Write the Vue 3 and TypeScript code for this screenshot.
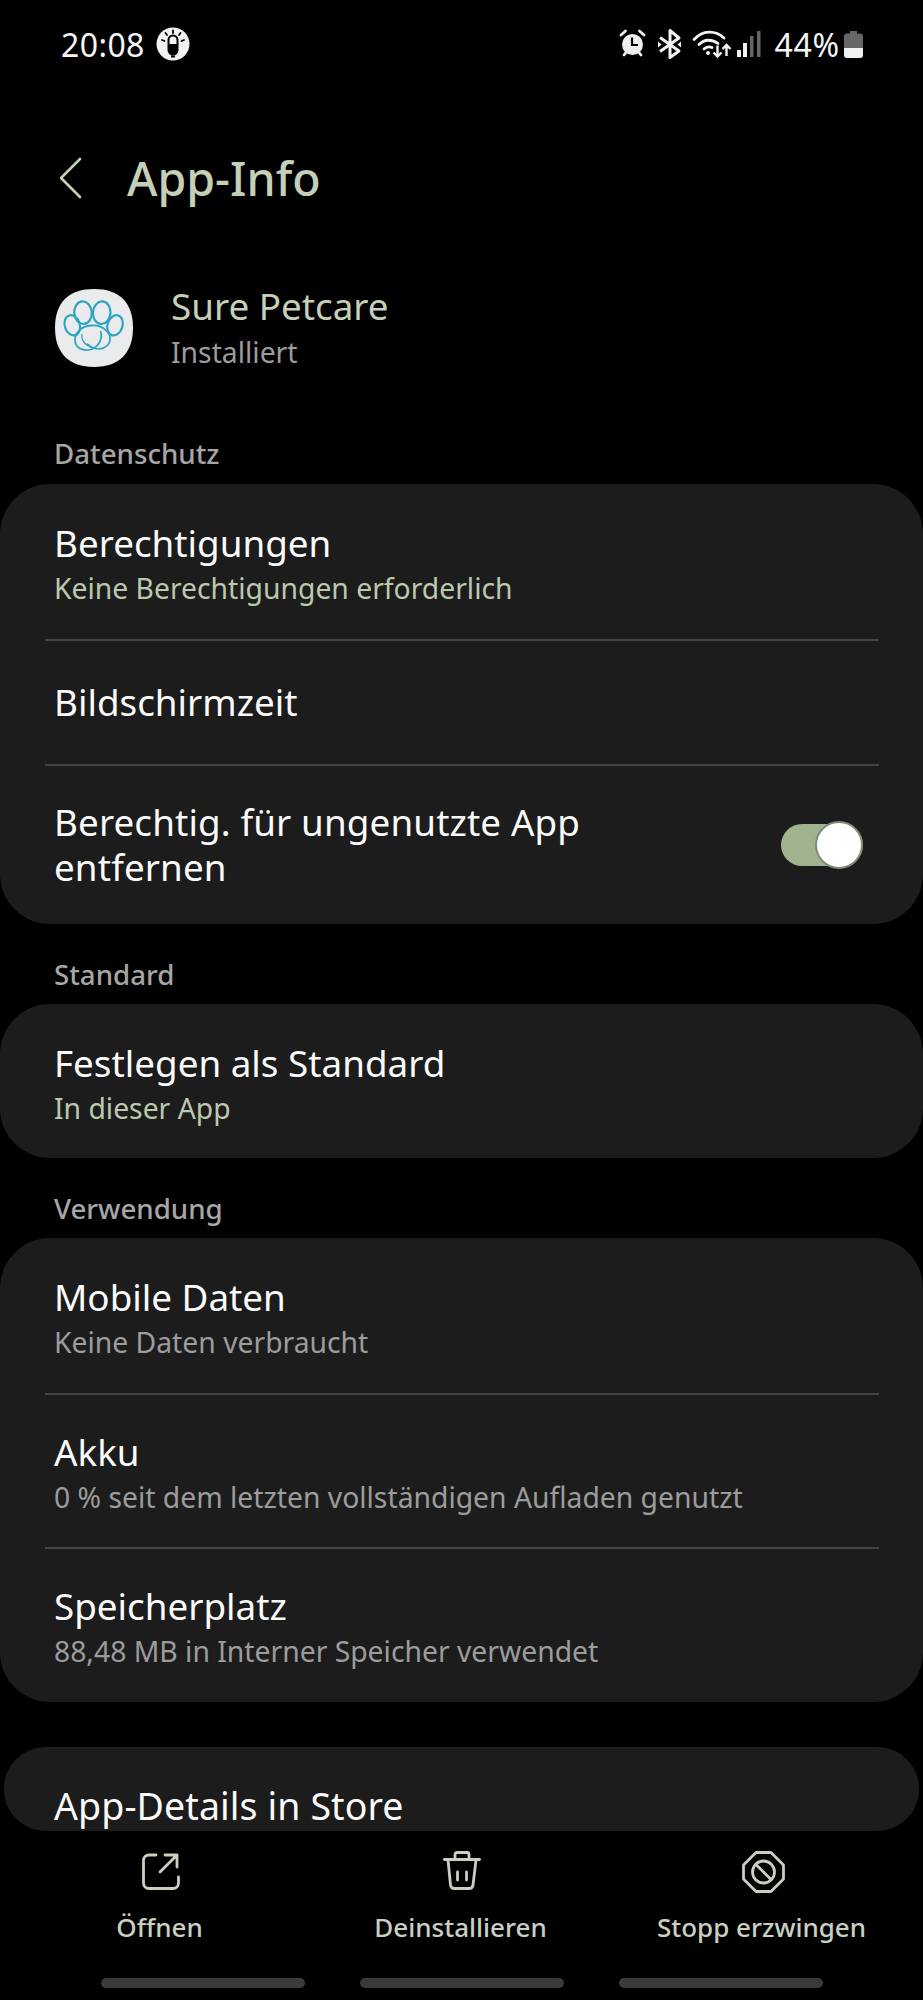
<script setup lang="ts">
interface Row {
  title: string
  sub?: string
  accent?: boolean
  h: number
}
const card1: Row[] = [
  { title: 'Berechtigungen', sub: 'Keine Berechtigungen erforderlich', accent: true, h: 156 },
  { title: 'Bildschirmzeit', h: 125 },
]
const card3: Row[] = [
  { title: 'Mobile Daten', sub: 'Keine Daten verbraucht', h: 156 },
  { title: 'Akku', sub: '0 % seit dem letzten vollständigen Aufladen genutzt', h: 154 },
  { title: 'Speicherplatz', sub: '88,48 MB in Interner Speicher verwendet', h: 154 },
]
</script>

<template>
  <div class="phone">
    <div class="scroll">
      <div class="status">
        <div class="status-left">
          <span class="time">20:08</span>
          <svg class="mic" width="34" height="34" viewBox="5 5 34 34">
            <circle cx="22" cy="22" r="16.5" fill="#f2f2f2" />
            <path d="M17.5 18a4.5 4.5 0 0 1 9 0v10a4.5 4.5 0 0 1-9 0z" fill="none" stroke="#000" stroke-width="2" />
            <path d="M17.5 22h9v6a4.5 4.5 0 0 1-9 0z" fill="#000" />
            <path d="M20 34.5h4" stroke="#000" stroke-width="2" />
            <path d="M22 8.5v2.5M14.5 11l1.5 2M29.5 11l-1.5 2M11 18l2.500 1M33 18l-2.500 1" stroke="#000" stroke-width="1.800" stroke-linecap="round" />
          </svg>
        </div>
        <div class="status-right">
          <svg width="150" height="40" viewBox="0 0 150 40">
            <circle cx="19.500" cy="20.500" r="10.500" fill="#efefef" />
            <path d="M19 13.500v7.500h6" fill="none" stroke="#000" stroke-width="2.200" />
            <path d="M8 11l4.500-4M31 11l-4.500-4M11 31l2-2.500M28 31l-2-2.500" stroke="#efefef" stroke-width="2.800" stroke-linecap="round" />
            <path d="M47 13.500L66 27 57 33.500V6.500L66 14 47 27.500" fill="none" stroke="#f2f2f2" stroke-width="3" stroke-linejoin="round" />
            <path d="M45 17.500l3.500 3-3.500 3zM68 17.500l-3.500 3 3.500 3z" fill="#f2f2f2" />
            <path d="M81 15.500C90 6 102 6 111 14" fill="none" stroke="#f2f2f2" stroke-width="2.800" stroke-linecap="round" />
            <path d="M86 20.500c5.500-5.500 13-5.500 19-1" fill="none" stroke="#f2f2f2" stroke-width="2.800" stroke-linecap="round" />
            <path d="M91 25c2.500-2.500 5.500-2.500 8-1.500" fill="none" stroke="#f2f2f2" stroke-width="2.800" stroke-linecap="round" />
            <circle cx="95" cy="29" r="2" fill="#f2f2f2" />
            <path d="M104.500 21.500v10.500M100.500 28.500l4 4 4-4M113.500 32V21.500M109.500 25l4-4 4 4" fill="none" stroke="#f2f2f2" stroke-width="2.400" />
            <rect x="124" y="26" width="4" height="7" fill="#f2f2f2" />
            <rect x="130" y="19" width="4" height="14" fill="#f2f2f2" />
            <rect x="137" y="12" width="3.500" height="21" fill="#666" />
            <rect x="144" y="7" width="3.500" height="26" fill="#666" />
          </svg>
          <span class="pct">44%</span>
          <svg class="battery" width="19" height="27" viewBox="0 0 19 27">
            <path d="M6 0h7v2.500h3a3 3 0 0 1 3 3V17H0V5.500a3 3 0 0 1 3-3h3z" fill="#666" />
            <path d="M0 17h19v7a3 3 0 0 1-3 3H3a3 3 0 0 1-3-3z" fill="#f0f0f0" />
          </svg>
        </div>
      </div>

      <header class="head">
        <svg class="chev" width="24" height="42" viewBox="0 0 24 42">
          <path d="M22 2L3 21l19 19" fill="none" stroke="#c5d0b8" stroke-width="2.600" stroke-linecap="round" stroke-linejoin="round" />
        </svg>
        <h1 class="title">App-Info</h1>
      </header>

      <section class="appinfo">
        <svg class="appicon" width="78" height="78" viewBox="8 5 78 78">
          <path d="M47 5C72 5 86 18 86 44 86 69 72 83 47 83 22 83 8 69 8 44 8 18 22 5 47 5z" fill="#e9ebec" />
          <g fill="none" stroke="#2fa5bf" stroke-width="2.200">
            <ellipse cx="25.300" cy="41.300" rx="7.500" ry="10.300" transform="rotate(-18 25.300 41.300)" />
            <ellipse cx="36" cy="28.700" rx="8.800" ry="11.300" transform="rotate(-5 36 28.700)" />
            <ellipse cx="54.700" cy="28.700" rx="8.800" ry="11.300" transform="rotate(5 54.700 28.700)" />
            <ellipse cx="68" cy="41.300" rx="7.500" ry="10.300" transform="rotate(18 68 41.300)" />
            <path d="M44 41.500C34 42 28 49 28 56 28 64 36 67.500 44 65.500 52 63 56 54 53.500 47" stroke-width="1.800" />
            <path d="M44 41.500C55 40.500 64 48 63 56 62 63 54 66 48 64.500 44 63.500 42 62 40 60" stroke-width="1.800" />
            <path d="M35 50C34 55 37 60 42 62" stroke-width="1.300" />
          </g>
        </svg>
        <div>
          <div class="appname">Sure Petcare</div>
          <div class="appstate">Installiert</div>
        </div>
      </section>

      <div class="label label-first">Datenschutz</div>
      <div class="card">
        <div v-for="r in card1" :key="r.title" class="row" :class="{ 'has-sub': r.sub, 'is-plain': !r.sub }" :style="{ height: r.h + 'px' }">
          <div class="row-title">{{ r.title }}</div>
          <div v-if="r.sub" class="row-sub" :class="{ accent: r.accent }">{{ r.sub }}</div>
        </div>
        <div class="row row-toggle">
          <div class="row-title wrap">Berechtig. für ungenutzte App entfernen</div>
          <div class="switch"><span class="thumb"></span></div>
        </div>
      </div>

      <div class="label">Standard</div>
      <div class="card">
        <div class="row has-sub row-single">
          <div class="row-title">Festlegen als Standard</div>
          <div class="row-sub accent">In dieser App</div>
        </div>
      </div>

      <div class="label">Verwendung</div>
      <div class="card">
        <div v-for="r in card3" :key="r.title" class="row has-sub" :style="{ height: r.h + 'px' }">
          <div class="row-title">{{ r.title }}</div>
          <div class="row-sub">{{ r.sub }}</div>
        </div>
      </div>

      <div class="card card-last">
        <div class="row-title">App-Details in Store</div>
      </div>
    </div>

    <nav class="actions">
      <div class="action">
        <svg width="60" height="55" viewBox="0 0 60 55">
          <g fill="none" stroke="#c8d0c0" stroke-width="2.800" stroke-linecap="round" stroke-linejoin="round">
            <path d="M26 10H19a5.500 5.500 0 0 0-5.500 5.500V38a5.500 5.500 0 0 0 5.500 5.500H43a5.500 5.500 0 0 0 5.500-5.500V32" />
            <path d="M30 27L47 10M35 10H47V22" />
          </g>
        </svg>
        <span>Öffnen</span>
      </div>
      <div class="action">
        <svg width="60" height="55" viewBox="0 0 60 55">
          <g fill="none" stroke="#c8d0c0" stroke-width="2.800" stroke-linecap="round" stroke-linejoin="round">
            <path d="M13.500 14.500H48.500" />
            <path d="M24 14V9.500a2 2 0 0 1 2-2h10a2 2 0 0 1 2 2V14" />
            <path d="M17 15l2.500 25a4 4 0 0 0 4 3.500H38a4 4 0 0 0 4-3.500L45 15" />
            <path d="M26.500 27v8M35.500 27v8" />
          </g>
        </svg>
        <span>Deinstallieren</span>
      </div>
      <div class="action">
        <svg width="60" height="55" viewBox="0 0 60 55">
          <g fill="none" stroke="#c8d0c0" stroke-width="2.800" stroke-linecap="round" stroke-linejoin="round">
            <path d="M24 7.500H39L51.500 20V34L39 46.500H24L11.500 34V20z" />
            <circle cx="31.500" cy="27" r="11" />
            <path d="M25 20.500L38 33.500" />
          </g>
        </svg>
        <span>Stopp erzwingen</span>
      </div>
    </nav>

    <div class="navbar">
      <span></span><span></span><span></span>
    </div>
  </div>
</template>

<style scoped>
.phone {
  width: 923px;
  height: 2000px;
  background: #000;
  color: #fff;
  font-family: "Noto Sans", "Liberation Sans", sans-serif;
  display: flex;
  flex-direction: column;
  overflow: hidden;
}
.scroll {
  height: 1831px;
  overflow: hidden;
  flex: none;
}
.status {
  height: 88px;
  display: flex;
  justify-content: space-between;
  align-items: center;
  padding: 0 60px 0 61px;
}
.status-left,
.status-right {
  display: flex;
  align-items: center;
}
.time {
  font-size: 32px;
  color: #f5f5f5;
  letter-spacing: 0.4px;
}
.mic {
  margin-left: 11px;
}
.status-right svg:first-child {
  margin-right: 11px;
}
.pct {
  font-size: 32px;
  letter-spacing: 0.8px;
  color: #f5f5f5;
}
.battery {
  margin-left: 4px;
}
.head {
  height: 168px;
  box-sizing: border-box;
  display: flex;
  align-items: center;
  padding: 12px 0 0 58px;
}
.chev {
  margin-right: 45px;
}
.title {
  margin: 0;
  font-size: 46.500px;
  font-weight: 500;
  color: #c5d0b8;
}
.appinfo {
  display: flex;
  align-items: center;
  gap: 38px;
  padding: 0 0 0 55px;
  height: 143px;
}
.appicon {
  flex: none;
}
.appname {
  font-size: 36.800px;
  color: #c5d0b8;
  line-height: 46px;
  margin-top: 1px;
}
.appstate {
  font-size: 28.300px;
  color: #9c9c9c;
  line-height: 42px;
  margin-top: 2px;
}
.label {
  height: 80px;
  padding: 33px 0 0 54px;
  box-sizing: border-box;
  font-size: 27.700px;
  font-weight: 500;
  color: #a6a6a6;
  line-height: 34px;
}
.label-first {
  height: 85px;
  padding-top: 37px;
}
.card {
  background: #1c1c1c;
  border-radius: 50px;
}
.row {
  box-sizing: border-box;
  padding: 0 45px 0 54px;
  display: flex;
  flex-direction: column;
  justify-content: center;
  position: relative;
}
.has-sub {
  padding-top: 6px;
}
.is-plain {
  padding-bottom: 2px;
}
.row-single {
  height: 154px;
  padding-top: 7px;
}
.row + .row::before {
  content: "";
  position: absolute;
  left: 45px;
  right: 44px;
  top: -1px;
  height: 2px;
  background: #434343;
}
.row-title {
  font-size: 36.800px;
  line-height: 46px;
  color: #fafafa;
}
.row-sub {
  font-size: 28.300px;
  line-height: 44px;
  color: #9c9c9c;
}
.row-sub.accent {
  color: #bcc8ae;
}
.row-toggle {
  flex-direction: row;
  align-items: center;
  justify-content: space-between;
  height: 159px;
  padding-top: 1px;
}
.wrap {
  width: 610px;
  line-height: 45px;
  letter-spacing: 0.12px;
}
.switch {
  width: 82px;
  height: 42px;
  border-radius: 21px;
  background: #a0b38f;
  position: relative;
  flex: none;
  margin-right: 15px;
}
.thumb {
  position: absolute;
  right: 0;
  top: -3px;
  width: 48px;
  height: 48px;
  box-sizing: border-box;
  border-radius: 50%;
  background: #fff;
  border: 2px solid #7f8b75;
}
.card-last {
  height: 84px;
  margin: 45px 4px 0;
  border-radius: 42px / 41px;
  padding: 36px 0 0 50px;
  box-sizing: border-box;
  overflow: hidden;
}
.card-last .row-title {
  font-size: 37.500px;
  letter-spacing: 0.1px;
}
.actions {
  display: grid;
  grid-template-columns: repeat(3, 1fr);
  padding: 14px 11px 0 9px;
  height: 147px;
  box-sizing: border-box;
  flex: none;
}
.action {
  display: flex;
  flex-direction: column;
  align-items: center;
  font-size: 26px;
  font-weight: 500;
  color: #c8d0c0;
  line-height: 34px;
  gap: 10px;
}
.navbar {
  display: flex;
  padding: 0 0 0 101px;
  gap: 55px;
}
.navbar span {
  width: 204px;
  height: 10px;
  border-radius: 5px;
  background: #3a3a3a;
}
</style>
